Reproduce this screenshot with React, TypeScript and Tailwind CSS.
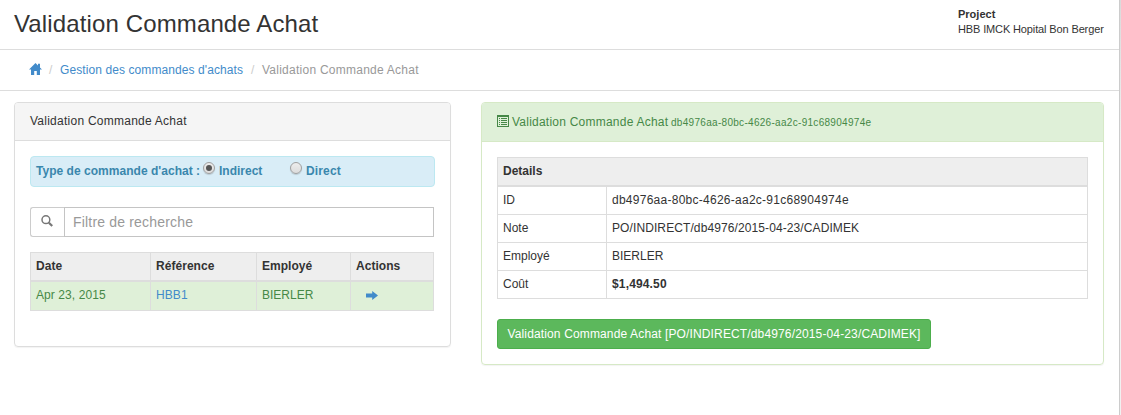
import React from 'react';

function HomeIcon() {
  return (
    <svg width="13" height="12" viewBox="0 0 13 12" fill="#428bca" className="relative -top-px shrink-0">
      <path d="M6.5 0 13 6.6H11V12H7.8V8H5.2V12H2V6.6H0Z M9 .8H11V5L9 3Z" />
    </svg>
  );
}

function SearchIcon() {
  return (
    <svg width="12" height="12" viewBox="0 0 12 12" fill="none" stroke="#777" className="relative -top-px -left-px shrink-0">
      <circle cx="4.9" cy="4.7" r="3.9" strokeWidth="1.5" />
      <path d="M7.9 7.7 11.2 11" strokeWidth="2.2" />
    </svg>
  );
}

function ArrowIcon() {
  return (
    <svg width="12" height="9" viewBox="0 0 12 9" fill="#428bca" className="shrink-0">
      <path d="M0 2.5H6.2V0L12 4.5 6.2 9V6.5H0Z" />
    </svg>
  );
}

function ListIcon() {
  return (
    <svg width="12" height="12" viewBox="0 0 12 12" fill="none" stroke="#468847" shapeRendering="crispEdges" className="relative -top-px shrink-0">
      <path d="M.5 .5H11.5V11.5H.5Z M0 1.5H12" />
      <path d="M2 3.5H3M4 3.5H10M2 5.5H3M4 5.5H10M2 7.5H3M4 7.5H10M2 9.5H3M4 9.5H10" />
    </svg>
  );
}

function Radio({ checked = false }: { checked?: boolean }) {
  return (
    <span className="flex size-3 shrink-0 items-center justify-center rounded-full border border-[#a0a0a0] bg-linear-to-b from-[#ededed] to-[#dcdcdc] shadow-[0_1px_1px_rgba(0,0,0,0.15)]">
      {checked && <span className="size-1.5 rounded-full bg-[#555]" />}
    </span>
  );
}

const details = [
  { label: 'ID', value: 'db4976aa-80bc-4626-aa2c-91c68904974e', style: 'tracking-[0.26px]' },
  { label: 'Note', value: 'PO/INDIRECT/db4976/2015-04-23/CADIMEK', style: 'tracking-[0.1px]' },
  { label: 'Employé', value: 'BIERLER', style: '' },
  { label: 'Coût', value: '$1,494.50', style: 'font-bold tracking-[0.15px]' },
];

export default function App() {
  return (
    <div className="flex h-[415px] w-[1121px] overflow-hidden bg-white font-['Liberation_Sans',Arial,sans-serif] text-xs leading-[17px] text-[#333]">
      <div className="w-[1119px] shrink-0">
        <header className="flex h-[50px] justify-between border-b border-[#ddd] pr-[14px] pl-[14px]">
          <h1 className="pt-[9px] text-2xl leading-[30px] tracking-[0.13px] whitespace-nowrap">Validation Commande Achat</h1>
          <div className="w-[147px] pt-[7px] text-[11px] leading-[15px] whitespace-nowrap">
            <div className="font-bold">Project</div>
            <div className="tracking-[-0.13px]">HBB IMCK Hopital Bon Berger</div>
          </div>
        </header>

        <nav className="flex h-[41px] items-center border-b border-[#ddd] pl-[29px] whitespace-nowrap">
          <HomeIcon />
          <span className="w-[18px] pl-[7px] text-[#ccc]">/</span>
          <a className="w-[183px] tracking-[0.09px] text-[#428bca]">Gestion des commandes d'achats</a>
          <span className="w-[19px] pl-2 text-[#ccc]">/</span>
          <span className="tracking-[0.25px] text-[#999]">Validation Commande Achat</span>
        </nav>

        <main className="flex items-start gap-[30px] pt-[11px] pl-[14px]">
          <section className="h-[245px] w-[437px] rounded border border-[#ddd] shadow-[0_1px_1px_rgba(0,0,0,0.05)]">
            <div className="h-[37px] rounded-t-[3px] bg-[#f5f5f5] pt-2.5 pl-[15px] tracking-[0.25px]">Validation Commande Achat</div>
            <div className="border-t border-[#ddd] pt-[15px] pl-[15px]">
              <div className="flex h-[31px] w-[405px] items-start rounded border border-[#bce8f1] bg-[#d9edf7] pl-[5px] font-bold text-[#3a87ad] whitespace-nowrap">
                <span className="w-[167px] pt-1.5 tracking-[0.03px]">Type de commande d'achat :</span>
                <span className="pt-[5px]"><Radio checked /></span>
                <span className="w-[75px] pt-1.5 pl-1">Indirect</span>
                <span className="pt-[5px]"><Radio /></span>
                <span className="pt-1.5 pl-1 tracking-[0.15px]">Direct</span>
              </div>
              <div className="mt-5 flex h-[30px] w-[404px]">
                <div className="flex w-[34px] items-center justify-center rounded-l-[3px] border border-r-0 border-[#ccc]">
                  <SearchIcon />
                </div>
                <div className="flex flex-1 items-center border border-[#c4c4c4] pl-2 text-sm tracking-[0.18px] text-[#999]">Filtre de recherche</div>
              </div>
              <table className="mt-[15px] w-[404px] table-fixed border-separate border-spacing-0 border-t border-l border-[#ddd] text-left">
                <colgroup>
                  <col className="w-[120px]" />
                  <col className="w-[106px]" />
                  <col className="w-[94px]" />
                  <col className="w-[83px]" />
                </colgroup>
                <thead>
                  <tr className="h-[29px] bg-[#eee]">
                    {['Date', 'Référence', 'Employé', 'Actions'].map((h) => (
                      <th key={h} className="border-r border-b-2 border-[#ddd] p-0 pl-[5px] tracking-[0.04px]">{h}</th>
                    ))}
                  </tr>
                </thead>
                <tbody>
                  <tr className="h-[29px] bg-[#dff0d8] text-[#468847]">
                    <td className="border-r border-b border-[#ddd] p-0 pb-0.5 pl-[5px] tracking-[0.08px]">Apr 23, 2015</td>
                    <td className="border-r border-b border-[#ddd] p-0 pb-0.5 pl-[5px] tracking-[0.08px] text-[#428bca]">HBB1</td>
                    <td className="border-r border-b border-[#ddd] p-0 pb-0.5 pl-[5px]">BIERLER</td>
                    <td className="border-r border-b border-[#ddd] p-0 pb-0.5 pl-[15px]"><ArrowIcon /></td>
                  </tr>
                </tbody>
              </table>
            </div>
          </section>

          <section className="h-[263px] w-[623px] rounded border border-[#d6e9c6] shadow-[0_1px_1px_rgba(0,0,0,0.05)]">
            <div className="flex h-[38px] items-center rounded-t-[3px] bg-[#dff0d8] pl-[15px] text-[#468847] whitespace-nowrap">
              <ListIcon />
              <span className="w-[162px] pl-[3px] tracking-[0.23px]">Validation Commande Achat</span>
              <span className="pt-px text-[10px] tracking-[0.3px]">db4976aa-80bc-4626-aa2c-91c68904974e</span>
            </div>
            <div className="border-t border-[#d6e9c6] pt-[15px] pl-[15px]">
              <table className="w-[591px] table-fixed border-separate border-spacing-0 border-t border-l border-[#ddd] text-left">
                <colgroup>
                  <col className="w-[109px]" />
                  <col className="w-[481px]" />
                </colgroup>
                <thead>
                  <tr className="h-[29px] bg-[#eee]">
                    <th colSpan={2} className="border-r border-b-2 border-[#ddd] p-0 pl-[5px]">Details</th>
                  </tr>
                </thead>
                <tbody>
                  {details.map((d) => (
                    <tr key={d.label} className="h-7">
                      <td className="border-r border-b border-[#ddd] p-0 pl-[5px]">{d.label}</td>
                      <td className="border-r border-b border-[#ddd] p-0 pl-[5px]"><span className={d.style}>{d.value}</span></td>
                    </tr>
                  ))}
                </tbody>
              </table>
              <button className="mt-5 flex h-[30px] w-[434px] items-center justify-center rounded-[3px] border border-[#4cae4c] bg-[#5cb85c] tracking-[0.14px] text-white whitespace-nowrap">
                Validation Commande Achat [PO/INDIRECT/db4976/2015-04-23/CADIMEK]
              </button>
            </div>
          </section>
        </main>
      </div>
      <aside className="flex w-0.5 shrink-0 flex-col border-l border-[#ccc] bg-[#f1f1f1]">
        <div className="h-[140px] bg-linear-to-b from-[#dadada] to-[#f1f1f1]" />
      </aside>
    </div>
  );
}
